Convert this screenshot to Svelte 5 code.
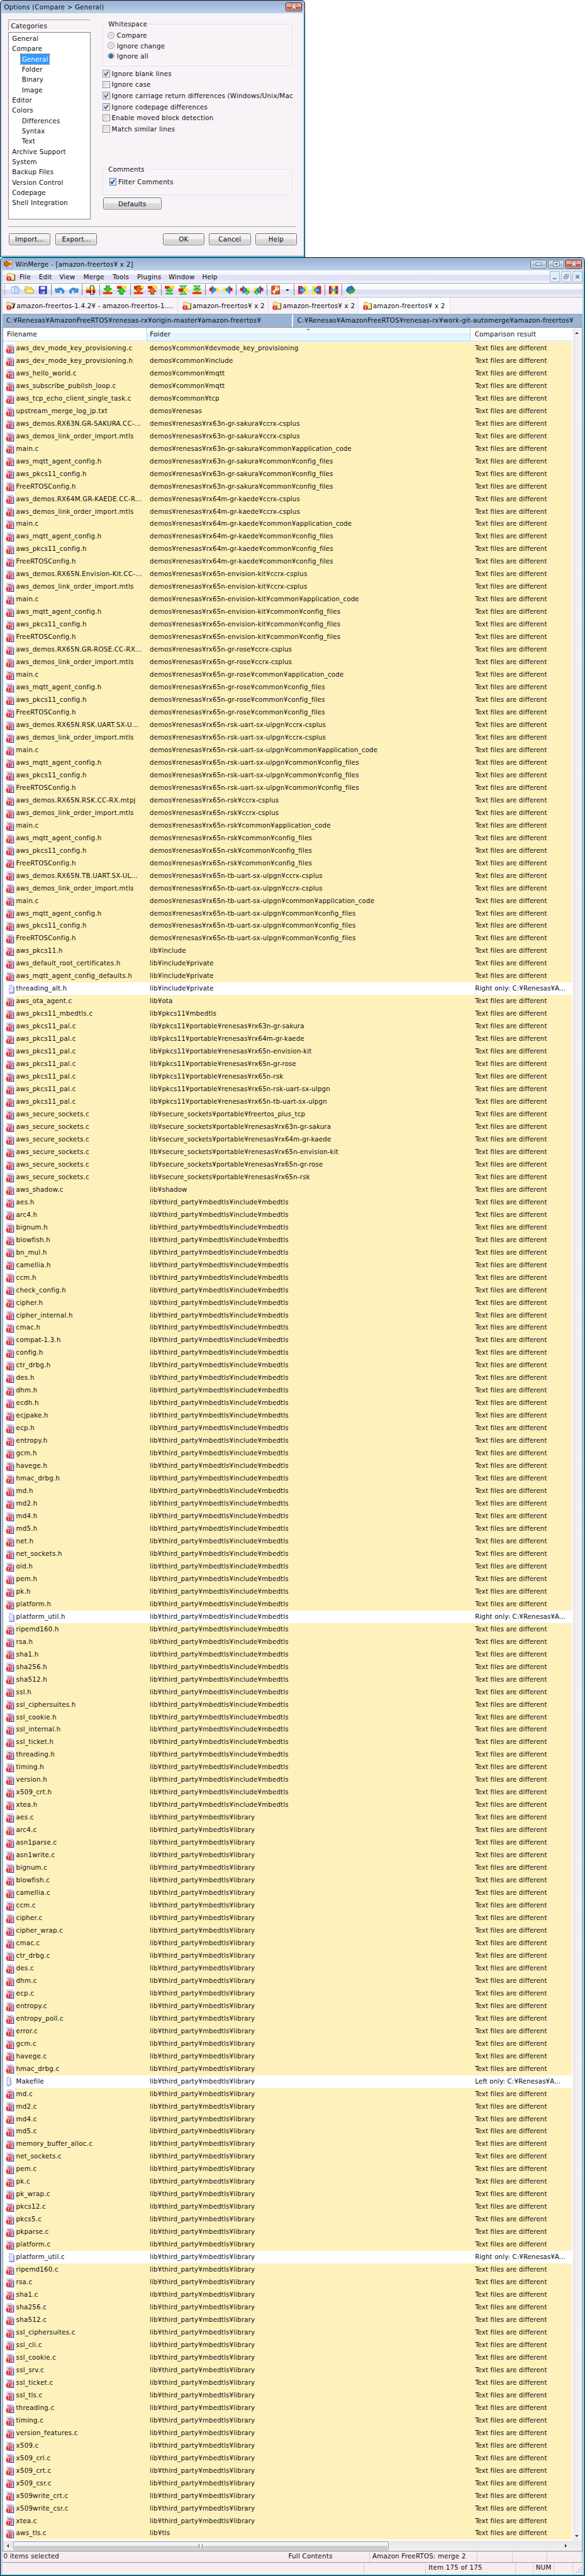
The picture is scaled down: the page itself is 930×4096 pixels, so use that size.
<script>
  const categories = [
    ['General', 0], ['Compare', 0], ['General', 1, true], ['Folder', 1], ['Binary', 1], ['Image', 1],
    ['Editor', 0], ['Colors', 0], ['Differences', 1], ['Syntax', 1], ['Text', 1],
    ['Archive Support', 0], ['System', 0], ['Backup Files', 0], ['Version Control', 0],
    ['Codepage', 0], ['Shell Integration', 0]
  ];
  const radios = [['Compare', false], ['Ignore change', false], ['Ignore all', true]];
  const checks = [
    ['Ignore blank lines', true, 19],
    ['Ignore case', false, 20],
    ['Ignore carriage return differences (Windows/Unix/Mac', true, 19],
    ['Ignore codepage differences', true, 20],
    ['Enable moved block detection', false, 19],
    ['Match similar lines', false, 19]
  ];
  const menus = [['File', 34], ['Edit', 36], ['View', 42], ['Merge', 51], ['Tools', 43], ['Plugins', 55], ['Window', 59], ['Help', 40]];
  const tools = [
    'new', 'open', 'save', '|', 'undo', 'redo', '|', 'select', '|', 'nextdiff', 'prevdiff', '|',
    'nextconf', 'prevconf', '|', 'first', 'current', 'last', '|', 'right', 'left', '|',
    'rightnext', 'leftnext', '|', 'options', 'drop', '|', 'allright', 'allleft', '|', 'auto', '|', 'refresh'
  ];

  const rows = [];
  const add = (folder, names) => {
    for (const n of names.split(' ')) rows.push({ name: n, folder, side: '' });
  };
  add('demos¥common¥devmode_key_provisioning', 'aws_dev_mode_key_provisioning.c');
  add('demos¥common¥include', 'aws_dev_mode_key_provisioning.h');
  add('demos¥common¥mqtt', 'aws_hello_world.c aws_subscribe_publish_loop.c');
  add('demos¥common¥tcp', 'aws_tcp_echo_client_single_task.c');
  add('demos¥renesas', 'upstream_merge_log_jp.txt');
  for (const [board, project] of [
    ['rx63n-gr-sakura', 'RX63N.GR-SAKURA.CC-...'],
    ['rx64m-gr-kaede', 'RX64M.GR-KAEDE.CC-R...'],
    ['rx65n-envision-kit', 'RX65N.Envision-Kit.CC-...'],
    ['rx65n-gr-rose', 'RX65N.GR-ROSE.CC-RX...'],
    ['rx65n-rsk-uart-sx-ulpgn', 'RX65N.RSK.UART.SX-U...'],
    ['rx65n-rsk', 'RX65N.RSK.CC-RX.mtpj'],
    ['rx65n-tb-uart-sx-ulpgn', 'RX65N.TB.UART.SX-UL...']
  ]) {
    const base = 'demos¥renesas¥' + board;
    add(base + '¥ccrx-csplus', 'aws_demos.' + project + ' aws_demos_link_order_import.mtls');
    add(base + '¥common¥application_code', 'main.c');
    add(base + '¥common¥config_files', 'aws_mqtt_agent_config.h aws_pkcs11_config.h FreeRTOSConfig.h');
  }
  add('lib¥include', 'aws_pkcs11.h');
  add('lib¥include¥private', 'aws_default_root_certificates.h aws_mqtt_agent_config_defaults.h threading_alt.h');
  add('lib¥ota', 'aws_ota_agent.c');
  add('lib¥pkcs11¥mbedtls', 'aws_pkcs11_mbedtls.c');
  for (const b of ['rx63n-gr-sakura', 'rx64m-gr-kaede', 'rx65n-envision-kit', 'rx65n-gr-rose', 'rx65n-rsk', 'rx65n-rsk-uart-sx-ulpgn', 'rx65n-tb-uart-sx-ulpgn'])
    add('lib¥pkcs11¥portable¥renesas¥' + b, 'aws_pkcs11_pal.c');
  for (const b of ['freertos_plus_tcp', 'renesas¥rx63n-gr-sakura', 'renesas¥rx64m-gr-kaede', 'renesas¥rx65n-envision-kit', 'renesas¥rx65n-gr-rose', 'renesas¥rx65n-rsk'])
    add('lib¥secure_sockets¥portable¥' + b, 'aws_secure_sockets.c');
  add('lib¥shadow', 'aws_shadow.c');
  add('lib¥third_party¥mbedtls¥include¥mbedtls',
    'aes.h arc4.h bignum.h blowfish.h bn_mul.h camellia.h ccm.h check_config.h cipher.h cipher_internal.h cmac.h compat-1.3.h config.h ctr_drbg.h des.h dhm.h ecdh.h ecjpake.h ecp.h entropy.h gcm.h havege.h hmac_drbg.h md.h md2.h md4.h md5.h net.h net_sockets.h oid.h pem.h pk.h platform.h platform_util.h ripemd160.h rsa.h sha1.h sha256.h sha512.h ssl.h ssl_ciphersuites.h ssl_cookie.h ssl_internal.h ssl_ticket.h threading.h timing.h version.h x509_crt.h xtea.h');
  add('lib¥third_party¥mbedtls¥library',
    'aes.c arc4.c asn1parse.c asn1write.c bignum.c blowfish.c camellia.c ccm.c cipher.c cipher_wrap.c cmac.c ctr_drbg.c des.c dhm.c ecp.c entropy.c entropy_poll.c error.c gcm.c havege.c hmac_drbg.c Makefile md.c md2.c md4.c md5.c memory_buffer_alloc.c net_sockets.c pem.c pk.c pk_wrap.c pkcs12.c pkcs5.c pkparse.c platform.c platform_util.c ripemd160.c rsa.c sha1.c sha256.c sha512.c ssl_ciphersuites.c ssl_cli.c ssl_cookie.c ssl_srv.c ssl_ticket.c ssl_tls.c threading.c timing.c version_features.c x509.c x509_crl.c x509_crt.c x509_csr.c x509write_crt.c x509write_csr.c xtea.c');
  add('lib¥tls', 'aws_tls.c');
  for (const r of rows) {
    if (['threading_alt.h', 'platform_util.h', 'platform_util.c'].includes(r.name)) r.side = 'Right';
    if (r.name === 'Makefile') r.side = 'Left';
  }
</script>

{#snippet closeGlyph()}
  <svg width="12" height="10" viewBox="0 0 12 10"><path d="M1 .8h3L6 3 8 .8h3L7.8 5 11 9.2H8L6 7 4 9.2H1L4.2 5z" fill="#fff" stroke="#5b5560" stroke-width=".9" /></svg>
{/snippet}

{#snippet check(on, hot)}
  <span class="box" class:hot>
    {#if on}<svg width="9" height="9" viewBox="0 0 9 9"><path d="M1 4l2.4 3.6L7.8.8" fill="none" stroke={hot ? '#10307c' : '#42559c'} stroke-width="1.9" /></svg>{/if}
  </span>
{/snippet}

{#snippet folderIcon(active)}
  <svg width="16" height="16" viewBox="0 0 16 16">
    {#if active}
      <path d="M2 2h4l1.500 1.500H12V7l4-4.500-2.600 10H2z" fill="#111" />
      <path d="M1 1.500h4l1.500 1.500h4v3l3-3.500-2 8.500H1z" fill="#fbe9a0" stroke="#7a6a20" stroke-width=".5" />
    {:else}
      <path d="M1.500 3.500l1.500-2h4l1 2h6.500v10h-13z" fill="#f4ec9c" stroke="#b3a548" />
      <path d="M2.500 5h11" stroke="#fffbd8" /><path d="M15 3.500v10.500H3" fill="none" stroke="#26240c" />
    {/if}
    <circle cx="4.600" cy="11.200" r="4.300" fill="#d8292c" stroke="#f0a0a0" stroke-width=".5" />
    <path d="M4.600 8.300v3.600M4.600 12.800v1.400" stroke="#fff" stroke-width="1.500" />
  </svg>
{/snippet}

{#snippet fileIcon(side)}
  <svg width="16" height="18" viewBox="0 0 16 18">
    {#if side === 'Right'}
      <path d="M6 2.500h5l3.500 3v11H6l2-1.500-2.500-2 2-2-3-2 3.500-2.500z" fill="#dfe3fb" stroke="#a6a6f0" />
      <path d="M14.500 5.500v11.200H6" fill="none" stroke="#5353b4" />
    {:else if side === 'Left'}
      <path d="M2.500 2.500h4l3 2.500-2 2 2.500 2-2 2 2 2-2.500 3.500h-5z" fill="#e5e8fd" stroke="#8f8fe4" />
      <path d="M2 16.500h6M9.500 5l-2 2 2.500 2-2 2 2 2-2 3" fill="none" stroke="#5959bd" stroke-width=".8" />
    {:else}
      <path d="M2.500 2.500h8.500l3 3v11.500H2.500z" fill="#fff" stroke="#9a9af4" />
      <path d="M11 2.500v3h3" fill="#dcdcff" stroke="#7d7dea" stroke-width=".8" />
      <path d="M13.900 6v11H3" fill="none" stroke="#35359f" stroke-width="1.300" />
      <path d="M4 5h5.500M4 7h8M7 9h5.300M8.500 11h4M9 13h3.500M9 15h2.500" stroke="#b01820" stroke-width="1.100" />
      <circle cx="4.700" cy="12.900" r="4.200" fill="#d92c30" stroke="#f0b0b0" stroke-width=".5" />
      <path d="M4.700 10.200v3.400M4.700 14.500v1.300" stroke="#fff" stroke-width="1.400" />
    {/if}
  </svg>
{/snippet}

{#snippet bars(a, b)}
  {#if a}<path d="M0 1h16v5H0z" fill={a} /><path d="M8 1h8v5H8z" fill="#ffe800" />{/if}
  {#if b}<path d="M0 10h16v5H0z" fill="#ffe800" /><path d="M0 12h16v3H0z" fill={b} />{/if}
{/snippet}

{#snippet tool(name)}
  <svg width="18" height="18" viewBox="-1 -1 18 18">
    {#if name === 'new'}
      <path d="M1.500 2.500h6v11h-6z" fill="#eaf3ff" stroke="#7fa6d4" /><path d="M6.500 1.500h5l3 3v9h-8z" fill="#c9e0f8" stroke="#6f9ccd" /><path d="M11.500 1.500v3h3" fill="#fff" stroke="#6f9ccd" />
    {:else if name === 'open'}
      <path d="M1 12.500v-9l1-1.500h4l1.500 1.500H13v3" fill="#fdf28a" stroke="#b09a18" /><path d="M2.500 6.500H15l1 7H3z" fill="#fff29a" stroke="#b89f10" /><path d="M3 12.500h12" stroke="#e1c52a" />
    {:else if name === 'save'}
      <path d="M1.500 1.500h13v13h-12l-1-1z" fill="#3b3bc8" stroke="#22228c" /><path d="M4 2h8v5H4z" fill="#e8edff" /><path d="M4.500 10h7v4.500h-7z" fill="#b9c3ee" /><path d="M5.500 10.500h2v3h-2z" fill="#26268c" />
    {:else if name === 'undo' || name === 'redo'}
      <path transform={name === 'redo' ? 'translate(16 0) scale(-1 1)' : ''} d="M.5 5l2.500 2c3-4.500 12-3 12.500 4.500l-2 2.500c-1.500 0-2-1-1.500-2 .5-4-4-5.500-6.200-3L8 12H.8z" fill="#39a4ee" stroke="#1458a8" />
    {:else if name === 'select'}
      <path d="M0 3h9v4H0z" fill="#ffe200" /><path d="M0 8h9v5H0z" fill="#ee1c1c" /><path d="M11 3h5v4h-5z" fill="#ffe200" /><path d="M11 8h5v5h-5z" fill="#ee1c1c" /><path d="M7.500.500h6v15h-6z" fill="none" stroke="#111" /><path d="M0 7.500h16" stroke="#a85" />
    {:else if name === 'nextdiff'}
      {@render bars('', '#f01818')}<path d="M5 .500h6v5h4L8 12.500 1 5.500h4z" fill="#2fd42f" stroke="#0b7a12" />
    {:else if name === 'prevdiff'}
      {@render bars('#f01818', '')}<path d="M5 15.500h6v-5h4L8 3.500l-7 7h4z" fill="#2fd42f" stroke="#0b7a12" />
    {:else if name === 'nextconf'}
      {@render bars('#f01818', '#f01818')}<path d="M5 .500h6v5h4L8 12.500 1 5.500h4z" fill="#e8602a" stroke="#8e2c08" />
    {:else if name === 'prevconf'}
      {@render bars('#f01818', '')}<path d="M5 15.500h6v-5h4L8 3.500l-7 7h4z" fill="#ee6a30" stroke="#8e2c08" />
    {:else if name === 'first'}
      {@render bars('#f01818', '')}<path d="M2 9l6-6 6 6zM1.500 15L8 8.500l6.500 6.500z" fill="#6bea5c" stroke="#0b7a12" />
    {:else if name === 'current'}
      <path d="M0 5h8v6H0z" fill="#f01818" /><path d="M8 5h8v6H8z" fill="#ffe800" /><path d="M2 .500h12L8 7zM2 15.500h12L8 9z" fill="#7bea6c" stroke="#0b7a12" />
    {:else if name === 'last'}
      {@render bars('', '#f01818')}<path d="M2 .800h12L8 7zM1.500 6h13L8 12.500z" fill="#6bea5c" stroke="#0b7a12" />
    {:else if name === 'right' || name === 'rightnext'}
      <path d="M0 4h6v6H0z" fill="#f01818" /><path d="M8 4h8v6H8z" fill="#ffe800" /><path d="M4.500 1v13L12 7.500z" fill="#2f9cf2" stroke="#0a48a8" />
      {#if name === 'rightnext'}<path d="M9 9.500h5v2h2l-4.500 4.500L7 11.500h2z" fill="#6ee85e" stroke="#0b6a10" />{/if}
    {:else if name === 'left' || name === 'leftnext'}
      <path d="M10 4h6v6h-6z" fill="#f01818" /><path d="M0 4h8v6H0z" fill="#ffe800" /><path d="M11.500 1v13L4 7.500z" fill="#2f9cf2" stroke="#0a48a8" />
      {#if name === 'leftnext'}<path d="M2 9.500h5v2h2l-4.500 4.500L0 11.500h2z" fill="#6ee85e" stroke="#0b6a10" />{/if}
    {:else if name === 'options'}
      <path d="M1 1h14v14H1z" fill="#e0571c" stroke="#b23a10" /><path d="M8 1.500h6.500v7z" fill="#f6a04c" /><path d="M4 12l7-7" stroke="#fff" stroke-width="2.400" /><path d="M13.500 4.500a3 3 0 11-3-2.500M2.500 11.500a2 2 0 112 2.500" fill="none" stroke="#fff" stroke-width="1.800" />
    {:else if name === 'allright' || name === 'allleft'}
      <g transform={name === 'allleft' ? 'translate(16 0) scale(-1 1)' : ''}><path d="M0 1h7v14H0z" fill="#ee1818" /><path d="M9 1h7v14H9z" fill="#ffe83a" /><path d="M3 4h3M3 12h3" stroke="#fff" opacity=".5" /><path d="M2.500 5.500h4v-3.500l6.500 6-6.500 6v-3.500h-4z" fill="#49b0f8" stroke="#0a48a8" /></g>
    {:else if name === 'auto'}
      <path d="M0 1h5v14H0zM11 1h5v14h-5z" fill="#ee1818" /><path d="M5 1h6v14H5z" fill="#ffe83a" /><path d="M1.500 6h2V4l4 4-4 4v-2h-2zM14.500 6h-2V4l-4 4 4 4v-2h2z" fill="#49b0f8" stroke="#0a3888" stroke-width=".9" />
    {:else if name === 'refresh'}
      <path d="M1 8.500C1.500 3 6 1 9.500 2.500V.500L14 4.500l-5 4v-2.500c-2-.5-3.500.5-4 4.500L2.500 12z" fill="#2c7de8" stroke="#123f9c" /><path d="M15.500 6.500c.5 5-4 7.500-8 6.500v2L3 11.500l5-4V10c2.500.3 4-.8 4-3.500z" fill="#35c92c" stroke="#0c6a14" />
    {/if}
  </svg>
{/snippet}

<div class="page">
  <section class="dialog">
    <header class="title">
      <span class="tt">Options (Compare &gt; General)</span>
      <button class="close">{@render closeGlyph()}</button>
    </header>
    <div class="dbody">
      <div class="upper">
        <div class="side">
          <div class="cathead">Categories</div>
          <div class="tree">
            {#each categories as [label, depth, selected]}
              <div class="node" class:sub={depth}><span class:selected>{label}</span></div>
            {/each}
          </div>
        </div>
        <div class="panel">
          <fieldset class="ws"><legend>Whitespace</legend>
            {#each radios as [label, on]}
              <div class="radio"><i class:on></i>{label}</div>
            {/each}
          </fieldset>
          <div class="checks">
            {#each checks as [label, on, h]}
              <div class="check" style="height:{h}px">{@render check(on, false)}{label}</div>
            {/each}
          </div>
          <fieldset class="cm"><legend>Comments</legend>
            <div class="check">{@render check(true, true)}Filter Comments</div>
          </fieldset>
          <button class="btn defaults">Defaults</button>
        </div>
      </div>
      <div class="actions">
        <button class="btn">Import...</button><button class="btn">Export...</button>
        <span class="grow"></span>
        <button class="btn">OK</button><button class="btn">Cancel</button><button class="btn">Help</button>
      </div>
    </div>
  </section>

  <section class="window">
    <header class="title main">
      <svg width="17" height="17" viewBox="0 0 17 17"><path d="M5 1h10v15H5z" fill="#e9eefc" stroke="#6a86b8" /><path d="M6 5h9v7H6z" fill="#ffc21c" /><path d="M7 3h6M7 13.500h6M9 7h5M9 9.500h5" stroke="#61719c" /><path d="M.5 5.500h4V2l6 6.500-6 6V11.500h-4z" fill="#e0651c" stroke="#8b4a20" /></svg>
      <span class="tt">WinMerge - [amazon-freertos¥ x 2]</span>
      <div class="wbtns">
        <button><svg width="12" height="6" viewBox="0 0 12 6"><path d="M1 1h10v4H1z" fill="#fff" stroke="#4d5a70" /></svg></button>
        <button><svg width="12" height="10" viewBox="0 0 12 10"><path d="M1 .8h10v8.400H1z" fill="#fff" stroke="#4d5a70" /><path d="M4 4h4v2H4z" fill="#8fa8c8" stroke="#4d5a70" /></svg></button>
        <button class="close">{@render closeGlyph()}</button>
      </div>
    </header>
    <div class="client">
      <nav class="menu">
        <span class="micon">{@render folderIcon(false)}</span>
        {#each menus as [m, w]}<span style="width:{w}px">{m}</span>{/each}
        <div class="mdi">
          <span><svg width="8" height="9" viewBox="0 0 8 9"><path d="M1 7.500h6" stroke="#6b7c92" stroke-width="2" /></svg></span>
          <span><svg width="9" height="9" viewBox="0 0 9 9"><path d="M3 3V1h5.500v4.500H6.500M.8 4h5v4h-5z" fill="none" stroke="#6b7c92" stroke-width="1.300" /></svg></span>
          <span><svg width="9" height="9" viewBox="0 0 9 9"><path d="M1.500 1.500l6 6M7.500 1.500l-6 6" stroke="#6b7c92" stroke-width="2" /></svg></span>
        </div>
      </nav>
      <div class="toolbar">
        <span class="grip"></span>
        {#each tools as t}
          {#if t === '|'}<span class="sep"></span>
          {:else if t === 'drop'}<span class="drop"></span>
          {:else}<span class="tool">{@render tool(t)}</span>{/if}
        {/each}
      </div>
      <div class="tabs">
        <div class="tab first">{@render folderIcon(true)}<span>amazon-freertos-1.4.2¥ - amazon-freertos-1....</span></div>
        <div class="tab">{@render folderIcon(false)}<span>amazon-freertos¥ x 2</span></div>
        <div class="tab">{@render folderIcon(false)}<span>amazon-freertos¥ x 2</span></div>
        <div class="tab active">{@render folderIcon(false)}<span>amazon-freertos¥ x 2</span></div>
      </div>
      <div class="paths">
        <div>C:¥Renesas¥AmazonFreeRTOS¥renesas-rx¥origin-master¥amazon-freertos¥</div>
        <div>C:¥Renesas¥AmazonFreeRTOS¥renesas-rx¥work-git-automerge¥amazon-freertos¥</div>
      </div>
      <div class="listarea">
        <div class="list">
          <div class="head">
            <div class="h1">Filename</div>
            <div class="h2">Folder<i class="sort"></i></div>
            <div class="h3">Comparison result</div>
          </div>
          {#each rows as r}
            <div class="row" class:only={r.side}>
              <span class="ic">{@render fileIcon(r.side)}</span>
              <div class="cells">
                <span class="c1">{r.name}</span>
                <span class="c2">{r.folder}</span>
                <span class="c3">{r.side ? r.side + ' only: C:¥Renesas¥A...' : 'Text files are different'}</span>
              </div>
            </div>
          {/each}
        </div>
        <div class="vbar"><i class="up"></i><i class="down"></i></div>
      </div>
      <div class="hbar">
        <i class="la"></i>
        <div class="thumb"><b></b><b></b><b></b></div>
        <i class="ra"></i>
      </div>
      <footer class="status one">
        <span style="width:499px">0 items selected</span>
        <span class="line" style="width:145px">Full Contents</span>
        <span class="line" style="width:188px">Amazon FreeRTOS: merge 2</span>
        <span class="line" style="width:61px"></span><span class="line" style="width:61px"></span><span class="line" style="width:61px"></span>
      </footer>
      <footer class="status two">
        <span class="line" style="width:634px"></span>
        <span class="line" style="width:108px"></span>
        <span class="line" style="width:157px">Item 175 of 175</span>
        <span class="line" style="width:31px"></span>
        <span class="line" style="width:36px">NUM</span>
        <span class="line" style="width:33px"></span>
        <svg class="size" width="14" height="14" viewBox="0 0 14 14"><path d="M11 3h2v2h-2zM7 7h2v2H7zM11 7h2v2h-2zM3 11h2v2H3zM7 11h2v2H7zM11 11h2v2h-2z" fill="#b9b4ba" /></svg>
      </footer>
    </div>
  </section>
</div>

<style>
  :global(body) { background: #fff; overflow: hidden; }
  .page, .page * { box-sizing: border-box; }
  .page {
    zoom: 0.908;
    width: 1024.3px;
    height: 4511px;
    font-family: "DejaVu Sans Condensed", "DejaVu Sans", sans-serif;
    font-stretch: condensed;
    font-size: 12.5px;
    letter-spacing: 0.28px;
    line-height: 18px;
    color: #0b0b10;
    background: #fff;
    white-space: nowrap;
  }
  svg { display: block; flex: none; }
  button { font: inherit; letter-spacing: inherit; color: inherit; padding: 0; display: flex; align-items: center; justify-content: center; }

  .dialog {
    width: 534px; height: 450px; background: #b9d1ea; border: 1px solid #16181c; border-top-width: 2px;
    border-bottom: 0; border-radius: 6px 6px 0 0; box-shadow: inset -1px -2px 0 #2cc4e4; padding: 0 2px 3px;
    display: flex; flex-direction: column; overflow: hidden;
  }
  .title { height: 22px; margin: 0 -2px; padding: 0 4px 0 6px; display: flex; align-items: center; background: linear-gradient(#98b1d2, #bad1eb); flex: none; }
  .tt { flex: 1; }
  .close { width: 28.5px; height: 16px; border: 1px solid #4f1c22; border-radius: 2px; background: linear-gradient(#e5a79c 0 48%, #c4492e 50%, #d9836e); box-shadow: inset 0 0 0 1px #ecc0b8; }
  .dbody { flex: 1; background: #f7f3f7; padding: 11px 13px 0 11px; }
  .upper { display: flex; height: 363px; border-bottom: 1px solid #a0a0a0; box-shadow: 0 1px #fff; }
  .side { width: 144px; flex: none; }
  .cathead { height: 20px; border: 1px solid #fff; border-top-color: #a0a0a0; border-left-color: #a0a0a0; padding-left: 4px; line-height: 20px; }
  .tree { margin-top: 2px; height: 328px; border: 1px solid #828790; background: #fff; padding: 1px 0 0 4px; }
  .node { height: 18px; line-height: 18px; }
  .node span { display: inline-block; padding: 0 2px; height: 18px; }
  .node.sub { padding-left: 17px; }
  .selected { background: #3399ff; color: #fff; outline: 1px dotted #46341e; outline-offset: -1px; }
  .panel { margin-left: 21.500px; width: 331px; flex: none; }
  fieldset { margin: 0; border: 1px solid #d5dfe8; border-radius: 3px; box-shadow: inset 0 0 0 1px #fff; min-width: 0; }
  legend { padding: 0 1px; height: 16px; line-height: 16px; }
  .ws { height: 81px; padding: 3px 8px; }
  .radio { height: 18px; display: flex; align-items: center; gap: 4px; }
  .radio i { width: 12px; height: 12px; border-radius: 50%; border: 1px solid #8a8c8f; background: radial-gradient(#d9dadd 30%, #fff 75%); }
  .radio i.on { background: radial-gradient(circle at 50% 50%, #2a9ad8 0 1px, #0d3555 3px, #dfe6ee 4px); }
  .checks { padding-top: 4px; height: 174px; }
  .check { display: flex; align-items: center; gap: 3px; }
  .box { width: 13px; height: 13px; border: 1px solid #8e8f8f; background: linear-gradient(135deg, #cfd2d8, #fafafa); box-shadow: inset 0 0 0 1px #f4f4f4; display: flex; align-items: center; justify-content: center; flex: none; }
  .box.hot { border-color: #3c7fb1; background: #dff3fd; }
  .cm { height: 52px; padding: 4px 8px 4px 10.500px; }
  .cm legend { margin-left: -2.500px; }
  .cm .check { height: 18px; }
  .btn { width: 73px; height: 21px; border: 1px solid #707070; border-radius: 3px; background: linear-gradient(#f4f2f4 0 48%, #dededf 50%, #cfcfd0); box-shadow: inset 0 0 0 1px #fbfbfb; }
  .defaults { width: 102px; margin: 5px 0 0 1px; }
  .actions { display: flex; padding: 11px 0 0 1px; gap: 8px; margin-right: -2px; }
  .actions .btn:nth-child(2) { margin-left: 1px; }
  .grow { flex: 1; }

  .window {
    height: 4061px; width: 1024.3px; background: #b9d1ea; border: 1px solid #101216; border-top-width: 2px; border-radius: 6px 6px 0 0;
    box-shadow: inset -1px -1px 0 #2cc4e4; padding: 0 3px 2px; display: flex; flex-direction: column; overflow: hidden;
  }
  .title.main { height: 23px; margin: 0 -3px; padding: 0 4px 0 5px; }
  .title.main .tt { padding-left: 4px; }
  .wbtns { display: flex; gap: 2px; }
  .wbtns button { width: 29px; height: 16px; border: 1px solid #61728c; border-radius: 2px; background: linear-gradient(#c8d7e8 0 48%, #a3b9d3 50%, #bdd0e6); box-shadow: inset 0 0 0 1px #dbe6f2; }
  .wbtns .close { border-color: #4f1c22; background: linear-gradient(#e5a79c 0 48%, #c4492e 50%, #d9836e); box-shadow: inset 0 0 0 1px #ecc0b8; }
  .client { flex: 1; background: #f7f3f7; display: flex; flex-direction: column; width: 1016px; }
  .menu { height: 21px; display: flex; align-items: center; background: linear-gradient(#fff, #f3f3fb 35%, #dcdef3 40%, #e2e4f6 75%, #fafafe); flex: none; }
  .micon { width: 30px; padding-left: 7px; }
  .mdi { margin-left: auto; display: flex; gap: 2px; }
  .mdi span { width: 18px; height: 19px; border: 1px solid #aab6c4; background: #deeefb; display: flex; align-items: center; justify-content: center; }
  .toolbar { height: 26px; border-top: 1px solid #a3a3a8; border-bottom: 1px solid #adb9c9; display: flex; align-items: center; background: linear-gradient(#fff, #f7f7fd 40%, #dcdef3 50%, #e0e3f6 80%, #f6f6fd); flex: none; }
  .grip { width: 11px; height: 20px; background: radial-gradient(circle, #aeb1bd 1px, transparent 1.400px) 3px 0 / 3px 4px repeat-y; }
  .tool { width: 24px; display: flex; justify-content: center; }
  .sep { width: 6px; height: 20px; display: flex; justify-content: center; }
  .sep::before { content: ""; width: 1px; background: #858588; }
  .drop { width: 17px; display: flex; justify-content: center; }
  .drop::before { content: ""; border: 4px solid transparent; border-top-color: #222; border-bottom: 0; }
  .tabs { height: 28px; display: flex; flex: none; }
  .tab { width: 158px; display: flex; align-items: center; padding-left: 7px; gap: 2px; border-right: 1px solid #e0dce2; margin-top: 1px; }
  .tab.first { width: 308px; }
  .tab.active { width: 161px; background: #fff; margin-top: 0; }
  .paths { height: 25px; display: flex; gap: 3px; border-bottom: 2px solid #838b9c; border-top: 1px solid #8ba2bf; flex: none; }
  .paths div { width: 506.500px; padding-left: 7px; background: #9bb4d4; line-height: 22px; }
  .listarea { display: flex; height: 3875px; flex: none; border-left: 1px solid #8d92a4; border-right: 1px solid #8d92a4; }
  .list { width: 996px; background: #fff; flex: none; }
  .head { display: flex; height: 25px; line-height: 24px; padding-bottom: 1px; }
  .head div { border-bottom: 1px solid #d5d5d5; background: linear-gradient(#fff 50%, #f7f8fa); }
  .head .h1 { width: 251px; padding-left: 7px; }
  .head .h2 { width: 568px; padding-left: 5px; position: relative; border: 1px solid #96d9f9; border-top: 0; background: linear-gradient(#f4fbff 40%, #dff1fb 44%, #eaf6fd); }
  .head .h3 { flex: 1; padding-left: 7px; }
  .sort { position: absolute; left: 279px; top: 1px; border: 4px solid transparent; border-bottom-color: #6d9cb8; border-top: 0; }
  .row { height: 22px; display: flex; }
  .ic { width: 21px; padding: 2px 0 0 5px; overflow: hidden; }
  .cells { flex: 1; display: flex; background: #fef1bb; line-height: 21px; padding-left: 2px; }
  .only .cells { background: #fff; }
  .c1 { width: 234px; }
  .c2 { width: 569.500px; letter-spacing: 0.2px; }
  .c3 { letter-spacing: 0.16px; }
  .vbar { flex: 1; background: linear-gradient(90deg, #fbf9fb 0 2px, #e9e7ea 3px, #f0eef1 8px, #f7f4f8); display: flex; flex-direction: column; justify-content: space-between; align-items: center; padding: 8px 0 6px; }
  .up { border: 4px solid transparent; border-bottom-color: #333; border-top: 0; }
  .down { border: 4px solid transparent; border-top-color: #333; border-bottom: 0; }
  .hbar { height: 18px; display: flex; align-items: center; background: linear-gradient(#e8e6e9, #f1eff1); border-left: 1px solid #8d92a4; border-right: 1px solid #8d92a4; flex: none; padding-left: 7px; }
  .la { border: 4px solid transparent; border-right-color: #333; border-left: 0; margin-right: 8px; }
  .thumb { width: 657px; height: 16px; border: 1px solid #9a9b9e; border-radius: 2px; background: linear-gradient(#f4f4f5 0 45%, #d0d1d4 50%, #c2c4c8); display: flex; align-items: center; justify-content: center; gap: 1px; box-shadow: inset 0 0 0 1px #f8f8f8; }
  .thumb b { width: 2px; height: 7px; background: linear-gradient(90deg, #606468 50%, #fff 50%); }
  .ra { border: 4px solid transparent; border-left-color: #333; border-right: 0; margin-left: 309px; }
  .status { display: flex; background: #f7edef; flex: none; line-height: 17px; height: 20px; }
  .status span { padding-left: 2px; flex: none; }
  .status .line { border-right: 1px solid #d3cdd1; }
  .status .line + .line { padding-left: 4px; }
  .one { border-top: 2px solid #8d8c99; }
  .two { border-top: 1px solid #9896a0; }
  .size { margin: 4px 0 0 2px; }
</style>
